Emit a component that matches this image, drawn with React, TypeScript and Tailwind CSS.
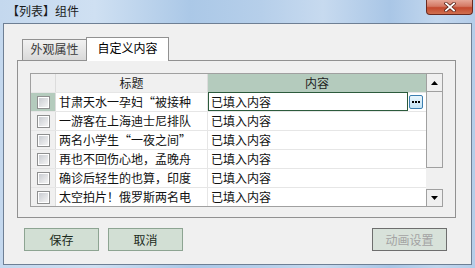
import React from "react";

const rows = [
  "甘肃天水一孕妇“被接种",
  "一游客在上海迪士尼排队",
  "两名小学生“一夜之间”",
  "再也不回伤心地，孟晚舟",
  "确诊后轻生的也算，印度",
  "太空拍片！俄罗斯两名电",
];

function CheckBox() {
  return (
    <div className="w-[13px] h-[13px] border border-[#8e8f8f] bg-white p-px">
      <div className="w-full h-full bg-[linear-gradient(135deg,#c9ccd1,#f4f4f4)]" />
    </div>
  );
}

function CloseButton() {
  return (
    <div className="mr-[2px] w-[47px] h-[15px] rounded-b-[4px] border border-t-0 border-[#6b2a1f] bg-[linear-gradient(to_bottom,#e6a797,#d47964_45%,#c4492e_55%,#d0704f)] flex items-center justify-center">
      <svg width="12" height="10" viewBox="0 0 12 10">
        <path d="M2 1.5 L10 8.5 M10 1.5 L2 8.5" stroke="#5a2418" strokeWidth="3.4" strokeLinecap="square" />
        <path d="M2 1.5 L10 8.5 M10 1.5 L2 8.5" stroke="#ffffff" strokeWidth="1.8" strokeLinecap="square" />
      </svg>
    </div>
  );
}

export default function App() {
  return (
    <div className="w-[475px] h-[268px] flex flex-col overflow-hidden font-['Noto_Sans_CJK_SC',sans-serif] text-[12px] bg-[linear-gradient(to_right,#c4d8ee,#cfe0f2_20%,#abc8e7_40%,#b6cfea_55%,#c7daef_68%,#a9c6e6_82%,#c2d7ee_92%,#b4cde9)]">
      {/* title bar */}
      <div className="h-[23px] flex items-start justify-between shrink-0">
        <div className="pl-[7px] pt-[3px] leading-[16px] text-[#1b1b1b]">【列表】组件</div>
        <CloseButton />
      </div>

      {/* client */}
      <div className="mx-[3px] mb-[3px] flex-1 border border-[#6e7f94] bg-[#f0f0f0] flex flex-col">
        {/* tabs */}
        <div className="mt-[13px] ml-[18px] h-[23px] flex items-end relative z-10">
          <div className="w-[64px] h-[21px] border border-r-0 border-b-0 border-[#919191] bg-[linear-gradient(to_bottom,#f2f2f2,#d9d9d9)] flex justify-center pt-[1px] leading-[16px] text-[#3a3a3a]">
            外观属性
          </div>
          <div className="w-[83px] h-[24px] -mb-px border border-b-0 border-[#919191] bg-white flex justify-center pt-[2px] leading-[16px] text-black">
            自定义内容
          </div>
        </div>

        {/* panel */}
        <div className="ml-[13px] w-[439px] h-[158px] border border-[#919191] bg-[#f0f0f0] pl-[12px] pt-[12px]">
          {/* grid */}
          <div className="w-[413px] h-[134px] border-l border-t border-b border-[#a0a0a0] flex">
            <div className="w-[395px] flex flex-col">
              {/* header */}
              <div className="h-[18px] flex leading-[18px] text-[#1e1e1e]">
                <div className="w-[25px] border-r border-[#dcdcdc] bg-[#f0f0f0]" />
                <div className="w-[152px] border-r border-[#dcdcdc] bg-[#f0f0f0] text-center">标题</div>
                <div className="flex-1 bg-[#b4cbbd] text-center">内容</div>
              </div>
              {rows.map((t, i) => (
                <div key={i} className="h-[19px] flex border-t border-[#e6e6e6] leading-[18px] text-[#111]">
                  <div
                    className={
                      i === 0
                        ? "w-[25px] border-r border-[#dcdcdc] bg-[#b4cbbd] flex items-center justify-center"
                        : "w-[25px] border-r border-[#dcdcdc] bg-[#f0f0f0] flex items-center justify-center"
                    }
                  >
                    <CheckBox />
                  </div>
                  <div className="w-[152px] border-r border-[#e6e6e6] bg-white pl-[3px] whitespace-nowrap overflow-hidden">
                    {t}
                  </div>
                  <div className="flex-1 bg-white flex items-start">
                    {i === 0 ? (
                      <>
                        <div className="-mt-px w-[200px] h-[19px] border border-[#2c5b3c] bg-white pl-[2px] leading-[17px]">
                          已填入内容
                        </div>
                        <div className="ml-px mt-[2px] w-[14px] h-[14px] rounded-[2px] border border-[#3c7fb1] bg-[linear-gradient(to_bottom,#eaf6fd,#c4e4f6)] flex items-center justify-center gap-[1px]">
                          <span className="w-[2px] h-[2px] bg-black" />
                          <span className="w-[2px] h-[2px] bg-black" />
                          <span className="w-[2px] h-[2px] bg-black" />
                        </div>
                      </>
                    ) : (
                      <div className="pl-[3px]">已填入内容</div>
                    )}
                  </div>
                </div>
              ))}
            </div>
            {/* scrollbar */}
            <div className="w-[17px] flex flex-col bg-[#f0f0f0]">
              <div className="h-[18px] border-x border-b border-[#a0a0a0] flex items-center justify-center">
                <svg width="7" height="4" viewBox="0 0 7 4">
                  <path d="M0 4 L3.5 0 L7 4 Z" fill="#000" />
                </svg>
              </div>
              <div className="h-[76px] border-x border-b border-[#a0a0a0] bg-[#f0f0f0]" />
              <div className="h-[21px]" />
              <div className="h-[17px] border-x border-t border-[#a0a0a0] flex items-center justify-center">
                <svg width="7" height="4" viewBox="0 0 7 4">
                  <path d="M0 0 L7 0 L3.5 4 Z" fill="#000" />
                </svg>
              </div>
            </div>
          </div>
        </div>

        {/* buttons */}
        <div className="mt-[10px] flex items-start">
          <div className="ml-[20px] w-[75px] h-[23px] border border-[#8da492] bg-[#d2dfd4] flex items-center justify-center leading-[16px] text-[#1c2b20]">
            保存
          </div>
          <div className="ml-[9px] w-[75px] h-[23px] border border-[#8da492] bg-[#d2dfd4] flex items-center justify-center leading-[16px] text-[#1c2b20]">
            取消
          </div>
          <div className="ml-auto mr-[24px] w-[75px] h-[23px] border border-[#6e6e6e] bg-[#d8e2da] flex items-center justify-center leading-[16px] text-[#a3a3a3]">
            动画设置
          </div>
        </div>
      </div>
    </div>
  );
}
